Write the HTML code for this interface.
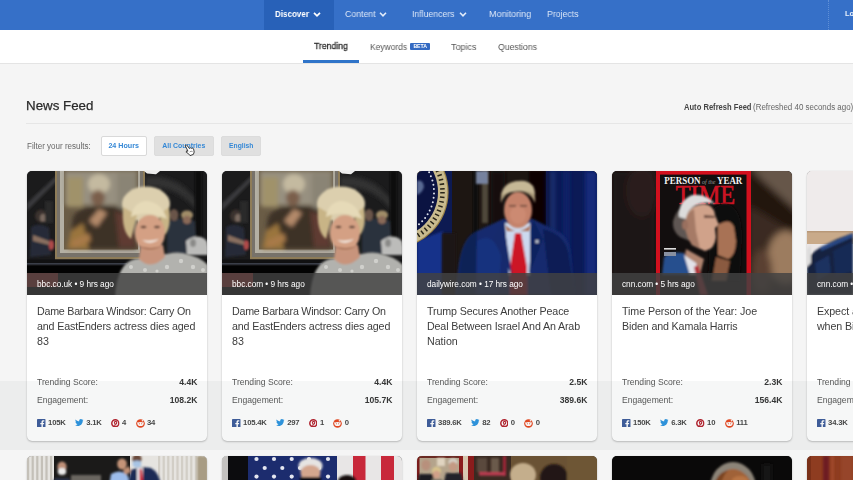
<!DOCTYPE html>
<html lang="en">
<head>
<meta charset="utf-8">
<title>News Feed</title>
<style>
*{box-sizing:border-box;margin:0;padding:0}
html,body{width:853px;height:480px;overflow:hidden;background:#f5f5f5;font-family:"Liberation Sans",sans-serif;color:#333}
.card .ttl,.card .row,.card .soc,.card .src,h1,#sub span,#top span{will-change:transform}
#top{position:absolute;left:0;top:0;width:853px;height:29.5px;background:#3670c8}
#top .act{position:absolute;left:264px;top:0;width:70px;height:29.5px;background:#2861b8}
#top span{position:absolute;transform-origin:0 50%;top:0;line-height:29px;font-size:9.3px;color:#dbe6f7;white-space:nowrap}
#top span.b{font-weight:bold;color:#fff}
#top svg{position:absolute;top:12px}
#top .sep{position:absolute;left:828px;top:0;width:0;height:30px;border-left:1px dotted #5f8fd6}
#sub{position:absolute;left:0;top:29.5px;width:853px;height:34.5px;background:#fff;border-bottom:1px solid #e4e4e4}
#sub span{position:absolute;transform-origin:0 50%;top:1.7px;line-height:33px;font-size:9.3px;color:#555;white-space:nowrap}
#sub span.on{color:#2e2e2e;-webkit-text-stroke:.3px #2e2e2e;line-height:32.4px;top:.8px}
#sub .ul{position:absolute;left:303px;top:30px;width:56px;height:3px;background:#2f74c9}
#sub .beta{position:absolute;left:410.4px;top:13.4px;width:19.5px;height:6.9px;background:#3269c2;border-radius:1px;color:#fff;font-size:5.2px;line-height:7.6px;font-weight:bold;text-align:center;letter-spacing:-.1px;overflow:hidden}
h1{position:absolute;left:26.4px;top:96.9px;font-size:13.33px;-webkit-text-stroke:.25px #2b2b2b;font-weight:normal;color:#2b2b2b;line-height:18px;white-space:nowrap}
#hr{position:absolute;left:26px;top:123px;width:826px;height:1px;background:#e6e6e6}
#auto{position:absolute;left:683.5px;top:101px;font-size:8.3px;line-height:12px;color:#444;font-weight:bold;white-space:nowrap;transform-origin:0 50%;transform:scaleX(.915)}
#auto2{position:absolute;left:753px;top:101px;font-size:8.3px;line-height:12px;color:#666;white-space:nowrap;transform-origin:0 50%;transform:scaleX(.957)}
#flt{position:absolute;left:26.7px;top:140px;font-size:8.3px;line-height:12px;color:#666;white-space:nowrap;transform-origin:0 50%;transform:scaleX(.967)}
.btn{position:absolute;top:136px;height:19.6px;border:1px solid #d9d9d9;border-radius:2px;background:#fff;color:#3588d6;font-size:7.33px;font-weight:bold;line-height:18.2px;text-align:center;white-space:nowrap}
.btn span{display:inline-block}
.btn.g{background:#e0e0e0;border-color:#dcdcdc}
.card{position:absolute;top:171px;width:180px;height:270px;background:#fff;border-radius:5px;box-shadow:0 1px 2px rgba(0,0,0,.22),0 0 1px rgba(0,0,0,.15);overflow:hidden}
.card .img{position:absolute;left:0;top:0;width:181px;height:124px;background:#444;overflow:hidden}
.card .img svg{position:absolute;left:0;top:0}
.card .src{position:absolute;left:0;top:102px;width:181px;height:22px;background:rgba(66,66,66,.82);color:#fff;font-size:8.3px;line-height:22px;padding-left:10px;white-space:nowrap;letter-spacing:-.04px}
.card .ttl{position:absolute;left:10.2px;top:133.2px;width:170px;font-size:10.7px;line-height:14.8px;color:#3d3d3d;white-space:nowrap}
.card .ttl span{display:block;letter-spacing:-.22px}
.card .row{position:absolute;left:10.2px;width:160.5px;font-size:8.6px;line-height:12px;color:#555;white-space:nowrap}
.card .row b{position:absolute;right:0;top:0;color:#333}
.card .soc{position:absolute;left:10px;top:245.8px;height:12px;display:flex;align-items:center;font-size:7.7px;line-height:12px;font-weight:bold;color:#444;white-space:nowrap;letter-spacing:-.2px}
.card .soc i{font-style:normal;margin:0 9.5px 0 2.4px}
.card .soc svg{flex:none;display:block}
.card2{top:456px;height:60px}
#band{position:absolute;left:0;top:381px;width:853px;height:68.5px;background:rgba(110,125,120,.062)}
</style>
</head>
<body>

<svg width="0" height="0" style="position:absolute">
<defs>
<filter id="b1" x="-20%" y="-20%" width="140%" height="140%"><feGaussianBlur stdDeviation="1"/></filter>
<filter id="b2" x="-20%" y="-20%" width="140%" height="140%"><feGaussianBlur stdDeviation="2"/></filter>
<filter id="b3" x="-30%" y="-30%" width="160%" height="160%"><feGaussianBlur stdDeviation="3.5"/></filter>
<symbol id="bw" viewBox="0 0 181 124">
  <rect width="181" height="124" fill="#1b1b1c"/>
  <!-- arch + bg -->
  <path d="M0 32 L30 4 L30 10 L0 40Z" fill="#38383a" filter="url(#b1)"/>
  <path d="M118 6 Q150 2 170 30 L170 40 Q150 14 118 16Z" fill="#303032" filter="url(#b2)"/>
  <rect x="168" y="0" width="7" height="70" fill="#080808" filter="url(#b1)"/>
  <!-- left bg person -->
  <g filter="url(#b1)">
    <ellipse cx="14" cy="45" rx="6" ry="6.5" fill="#3a322e"/>
    <ellipse cx="16" cy="47" rx="3" ry="4" fill="#7a6a60"/>
    <path d="M4 56 Q13 51 22 57 L24 84 L3 86 Z" fill="#262c38"/>
    <path d="M6 64 L22 70 L22 74 L6 70Z" fill="#8a7060"/>
    <ellipse cx="24.500" cy="74" rx="2.600" ry="5" fill="#b04848"/>
    <rect x="18" y="30" width="8" height="22" fill="#2c2c2a"/>
  </g>
  <!-- right bg people -->
  <g filter="url(#b1)">
    <path d="M140 52 Q150 44 168 50 L170 84 L140 82Z" fill="#2c323e"/>
    <ellipse cx="147" cy="44" rx="4.500" ry="6" fill="#6a5448"/>
    <ellipse cx="160" cy="44" rx="6" ry="4.500" fill="#a08c68"/>
    <ellipse cx="160" cy="49" rx="4" ry="4" fill="#8a6a58"/>
    <path d="M159 70 Q166 64 174 66 Q181 68 181 76 L181 84 L160 84Z" fill="#bcbcba"/>
    <ellipse cx="166" cy="72" rx="3" ry="4" fill="#8a8a88"/>
  </g>
  <!-- painting frame -->
  <rect x="28" y="-2" width="90" height="90.500" fill="#8e7c58"/>
  <rect x="30" y="-2" width="86" height="88" fill="#77726a"/>
  <rect x="33" y="-2" width="80" height="84" fill="#b4b0a4"/>
  <rect x="37" y="0" width="74" height="78.500" fill="#6a5c46"/>
  <g filter="url(#b2)">
    <rect x="38" y="0" width="72" height="34" fill="#979080"/>
    <rect x="90" y="2" width="20" height="60" fill="#8a8474"/>
    <rect x="40" y="6" width="16" height="30" fill="#a0926a"/>
    <path d="M42 78 L46 46 Q54 34 70 36 Q92 32 104 44 L110 78Z" fill="#3c3028"/>
    <path d="M40 78 L44 60 L56 52 L62 78Z" fill="#9a743e"/>
    <path d="M88 40 L104 46 L108 76 L92 76Z" fill="#5e3a30"/>
    <ellipse cx="72" cy="13" rx="11" ry="10" fill="#c4baa0"/>
    <ellipse cx="71" cy="27" rx="7" ry="8" fill="#7a5e4c"/>
    <path d="M62 50 L72 38 L80 42 L70 56Z" fill="#b48a6a"/>
    <path d="M44 70 L62 62 L64 70 L46 77Z" fill="#a87a48"/>
  </g>
  <!-- table -->
  <rect x="0" y="88.500" width="181" height="36" fill="#111112"/>
  <rect x="0" y="92" width="100" height="1.600" fill="#3a3e48"/>
  <rect x="0" y="95" width="181" height="29" fill="#030303"/>
  <!-- woman -->
  <g filter="url(#b1)">
    <path d="M88 126 Q90 92 108 88 L128 86 Q146 80 156 82 Q174 86 181 94 L181 126Z" fill="#b2b2ae"/>
    <path d="M112 88 Q124 100 138 86 L136 74 L114 74Z" fill="#c8947c"/>
    <ellipse cx="119" cy="33" rx="24" ry="17.500" fill="#dccfae"/>
    <path d="M96 36 Q94 60 104 68 L110 44Z" fill="#c8b486"/>
    <path d="M142 36 Q145 56 138 64 L132 44Z" fill="#c8b486"/>
    <ellipse cx="123" cy="62" rx="15" ry="18" fill="#d4a084"/>
    <path d="M104 46 Q118 38 140 48 Q134 30 118 30 Q106 32 104 46Z" fill="#e6dab8"/>
    <path d="M115 69 Q123 75 132 68 Q123 71 115 69Z" fill="#f4ece4"/>
    <ellipse cx="116.500" cy="56" rx="3" ry="1.200" fill="#5a4034"/>
    <ellipse cx="130" cy="56" rx="3" ry="1.200" fill="#5a4034"/>
    <path d="M110 74 Q123 84 136 74 Q124 80 110 74Z" fill="#a8745c"/>
  </g>
  <g fill="#d0d0cc"><circle cx="104" cy="96" r="2"/><circle cx="118" cy="99" r="2"/><circle cx="140" cy="96" r="2.200"/><circle cx="154" cy="90" r="2.200"/><circle cx="166" cy="96" r="2.200"/><circle cx="130" cy="100" r="1.600"/><circle cx="176" cy="99" r="2"/></g>
  <path d="M117 0 L133 0 L129 3.200 L120 2.400Z" fill="#ececec"/>
  <!-- bbc logo faint -->
  <rect x="0" y="102" width="31" height="14" fill="#c0362c"/>
</symbol>

<symbol id="tr" viewBox="0 0 181 124">
  <rect width="181" height="124" fill="#1d1612"/>
  <rect x="56" y="0" width="5" height="110" fill="#0a0808" filter="url(#b1)"/>
  <rect x="74" y="0" width="14" height="60" fill="#120e0b" filter="url(#b2)"/>
  <rect x="112" y="0" width="18" height="70" fill="#080606" filter="url(#b1)"/>
  <!-- flag pole -->
  <rect x="65" y="0" width="6" height="52" fill="#50463a" filter="url(#b1)"/>
  <rect x="59" y="0" width="12" height="13" fill="#76829e" filter="url(#b1)"/>
  <!-- left curtain + seal -->
  <rect x="0" y="0" width="35" height="124" fill="#0d1a52"/>
  <path d="M0 70 L26 60 L25 124 L0 124Z" fill="#17338a" filter="url(#b1)"/>
  <rect x="25" y="62" width="14" height="62" fill="#1d1612" filter="url(#b1)"/>
  <circle cx="-25" cy="21" r="56.6" fill="#9c8448"/>
  <circle cx="-25" cy="21" r="55.4" fill="#c9bb8e"/>
  <circle cx="-25" cy="21" r="46" fill="#0b1342"/>
  <circle cx="-25" cy="21" r="50.5" fill="none" stroke="#2a2618" stroke-width="4.6" stroke-dasharray="1.5 3.1"/>
  <circle cx="12.1" cy="1.3" r="1" fill="#dfe3ee"/><circle cx="13.9" cy="5.3" r="1" fill="#dfe3ee"/><circle cx="15.4" cy="9.4" r="1" fill="#dfe3ee"/><circle cx="16.4" cy="13.7" r="1" fill="#dfe3ee"/><circle cx="16.9" cy="18.1" r="1" fill="#dfe3ee"/><circle cx="17.0" cy="22.5" r="1" fill="#dfe3ee"/><circle cx="16.6" cy="26.8" r="1" fill="#dfe3ee"/><circle cx="15.8" cy="31.2" r="1" fill="#dfe3ee"/><circle cx="14.5" cy="35.4" r="1" fill="#dfe3ee"/><circle cx="12.7" cy="39.4" r="1" fill="#dfe3ee"/><circle cx="10.6" cy="43.3" r="1" fill="#dfe3ee"/><circle cx="8.1" cy="46.9" r="1" fill="#dfe3ee"/><circle cx="5.2" cy="50.2" r="1" fill="#dfe3ee"/><circle cx="2.0" cy="53.2" r="1" fill="#dfe3ee"/>
  <path d="M0 10 Q6 8 7 16 Q5 22 0 24Z" fill="#5a6a94" filter="url(#b1)"/>
  <!-- right curtain -->
  <rect x="129" y="0" width="52" height="124" fill="#0b1a56"/>
  <g filter="url(#b2)">
    <rect x="129" y="0" width="5" height="124" fill="#091444"/>
    <rect x="135" y="0" width="2" height="124" fill="#2a3f8a"/>
    <rect x="146" y="0" width="7" height="124" fill="#0e2268"/>
    <rect x="168" y="0" width="12" height="124" fill="#12297a"/>
  </g>
  <!-- suit -->
  <g filter="url(#b1)">
    <path d="M38 124 L42 92 Q46 66 60 60 L86 48 L116 48 L140 60 Q152 64 154 84 L158 124Z" fill="#152b6e"/>
    <path d="M40 124 L44 88 Q48 66 60 61 L58 124Z" fill="#0f2156"/>
    <path d="M126 58 Q150 64 152 86 L158 124 L134 124Z" fill="#0d1e54"/>
    <path d="M60 70 Q76 60 84 84 L82 124 L60 124Z" fill="#19337e"/>
    <path d="M88 52 L113 52 L113 104 L92 104Z" fill="#ccd9ef"/>
    <path d="M98 62 L104 62 L110 96 L110 124 L93 124 L93 96Z" fill="#cc1428"/>
    <path d="M86 48 L95 104 L76 68Z" fill="#132a6c"/>
    <path d="M116 48 L112 104 L126 68Z" fill="#10245e"/>
    <rect x="118.500" y="69" width="3" height="3" fill="#c8ccd4"/>
  </g>
  <!-- head -->
  <g filter="url(#b1)">
    <ellipse cx="101" cy="39" rx="14" ry="18" fill="#c4826a"/>
    <ellipse cx="101" cy="44" rx="8" ry="9" fill="#cc8a72"/>
    <path d="M84 32 Q82 12 100 10 Q120 10 118 32 Q113 19 98 20 Q88 21 84 32Z" fill="#a89878"/>
    <path d="M84 24 Q90 8 108 10 Q118 12 118 24 Q108 16 84 24Z" fill="#c6b896"/>
    <path d="M88 54 Q100 66 114 54 L112 60 L90 60Z" fill="#a86c54"/>
    <rect x="92" y="34" width="7" height="1.6" fill="#6a4a3c"/>
    <rect x="103" y="34" width="7" height="1.6" fill="#6a4a3c"/>
  </g>
</symbol>
<symbol id="tm" viewBox="0 0 181 124">
  <rect width="181" height="124" fill="#1c1412"/>
  <g filter="url(#b3)">
    <rect x="0" y="0" width="44" height="124" fill="#1e1512"/>
    <ellipse cx="30" cy="20" rx="16" ry="26" fill="#2a1e1a"/>
    <rect x="136" y="-6" width="50" height="136" fill="#3a2a20"/>
    <path d="M138 -6 L190 -6 L190 44 L150 8Z" fill="#66564a"/>
    <path d="M136 0 L190 46 L190 66 L136 34Z" fill="#22160f"/>
    <ellipse cx="174" cy="86" rx="18" ry="26" fill="#9c7c5e"/>
    <ellipse cx="150" cy="100" rx="10" ry="22" fill="#5a4030"/>
  </g>
  <rect x="44" y="0" width="95" height="136" fill="#d3101e"/>
  <rect x="48" y="3.6" width="86.500" height="130" fill="#120e0e"/>
  <text x="91.3" y="13" font-family="Liberation Serif,serif" font-weight="bold" font-size="9.6" fill="#f4f4f4" text-anchor="middle" textLength="78" lengthAdjust="spacingAndGlyphs">PERSON<tspan font-style="italic" font-weight="normal" font-size="6.4" fill="#999"> of the </tspan>YEAR</text>
  <text x="93.500" y="33" font-family="Liberation Serif,serif" font-size="27.500" fill="#cc1424" stroke="#cc1424" stroke-width=".7" text-anchor="middle" textLength="59.500" lengthAdjust="spacingAndGlyphs">TIME</text>
  <!-- harris -->
  <g filter="url(#b1)">
    <path d="M98 44 Q104 30 118 34 Q130 40 130 66 L128 110 L96 110Z" fill="#0e0a0a"/>
    <path d="M106 54 Q118 46 122 56 L124 70 Q124 84 116 88 L106 84Z" fill="#a87254"/>
    <path d="M104 86 L118 90 L114 110 L100 110Z" fill="#8a5a40"/>
  </g>
  <!-- biden -->
  <g filter="url(#b1)">
    <path d="M61 50 Q64 40 70 36 L78 44 L78 70 L68 66 Q60 60 61 50Z" fill="#5e5652"/>
    <path d="M67 46 Q66 30 80 24 Q94 22 103 33 Q94 30 84 34 Q76 38 74 48Z" fill="#dcdcdc"/>
    <path d="M74 46 Q78 34 92 33 Q102 34 103 44 L107 54 L103 57 L104 66 Q103 78 93 80 L80 74 Q72 62 74 46Z" fill="#d0a28a"/>
    <path d="M74 48 Q76 40 82 38 L84 60 L88 78 L80 74 Q72 62 74 48Z" fill="#a67a66"/>
    <ellipse cx="73" cy="54" rx="3" ry="5" fill="#9a705e"/>
    <path d="M92 44 L103 45 L103 47 L92 47Z" fill="#6a4a3e"/>
    <path d="M74 78 L92 88 L88 104 L70 104Z" fill="#b08470"/>
    <path d="M50 104 L52 86 Q60 80 72 82 L84 104Z" fill="#28508e"/>
    <path d="M72 84 L84 92 L88 104 L78 104Z" fill="#e2e2e8"/>
    <path d="M82 96 L86 94 L96 124 L88 124Z" fill="#b03038"/>
  </g>
  <rect x="52" y="77" width="12" height="1.6" fill="#ddd"/>
  <rect x="52" y="81" width="12" height="4" fill="#8890a0"/>
</symbol>
<symbol id="pc" viewBox="0 0 181 124">
  <rect width="181" height="124" fill="#ebe6e6"/>
  <rect x="0" y="0" width="181" height="60" fill="#efebeb"/>
  <rect x="0" y="60" width="181" height="13" fill="#c9aa8a"/>
  <rect x="0" y="60" width="181" height="1.5" fill="#b89878"/>
  <g filter="url(#b1)">
    <path d="M0 124 L0 88 L8 80 L14 76 L30 68 L46 62 L46 124Z" fill="#12203f"/>
    <path d="M8 92 L22 84 L24 102 L10 110Z" fill="#1c3260"/>
    <path d="M26 80 L46 70 L46 100 L28 106Z" fill="#182a54"/>
    <path d="M0 78 L4 74 L4 92 L0 96Z" fill="#dcdcdc"/>
    <path d="M14 76 L46 62 L46 66 L14 80Z" fill="#2c4a86"/>
  </g>
</symbol>

<symbol id="r1" viewBox="0 0 181 30">
  <rect width="181" height="30" fill="#e6e4e0"/>
  <rect x="0" y="0" width="2.2" height="30" fill="#c4c0b8"/><rect x="4.6" y="0" width="2.2" height="30" fill="#c4c0b8"/><rect x="9.2" y="0" width="2.2" height="30" fill="#c4c0b8"/><rect x="13.799999999999999" y="0" width="2.2" height="30" fill="#c4c0b8"/><rect x="18.4" y="0" width="2.2" height="30" fill="#c4c0b8"/><rect x="23.0" y="0" width="2.2" height="30" fill="#c4c0b8"/><rect x="27.6" y="0" width="2.2" height="30" fill="#c4c0b8"/><rect x="131" y="0" width="2.2" height="30" fill="#d2cec6"/><rect x="135.6" y="0" width="2.2" height="30" fill="#d2cec6"/><rect x="140.2" y="0" width="2.2" height="30" fill="#d2cec6"/><rect x="144.79999999999998" y="0" width="2.2" height="30" fill="#d2cec6"/><rect x="149.39999999999998" y="0" width="2.2" height="30" fill="#d2cec6"/><rect x="153.99999999999997" y="0" width="2.2" height="30" fill="#d2cec6"/><rect x="158.59999999999997" y="0" width="2.2" height="30" fill="#d2cec6"/><rect x="163.19999999999996" y="0" width="2.2" height="30" fill="#d2cec6"/><rect x="167.79999999999995" y="0" width="2.2" height="30" fill="#d2cec6"/><rect x="172.39999999999995" y="0" width="2.2" height="30" fill="#d2cec6"/><rect x="176.99999999999994" y="0" width="2.2" height="30" fill="#d2cec6"/>
  <rect x="27" y="0" width="76" height="30" fill="#1b1a19"/>
  <rect x="170" y="0" width="11" height="30" fill="#a89c84" filter="url(#b1)"/>
  <g filter="url(#b1)">
    <ellipse cx="35" cy="11" rx="4.6" ry="5.5" fill="#c09078"/>
    <ellipse cx="35" cy="15.5" rx="4.2" ry="3.6" fill="#ececec"/>
    <path d="M24 30 L28 22 L42 22 L46 30Z" fill="#2a3244"/>
    <rect x="44" y="19" width="30" height="12" fill="#6a6660"/>
    <ellipse cx="95" cy="8" rx="4.8" ry="5.6" fill="#c49478"/>
    <path d="M82 30 L84 18 Q92 13 100 18 L104 30Z" fill="#9cbcea"/>
    <path d="M96 14 L102 10 L104 16 L98 19Z" fill="#c09074"/>
    <ellipse cx="110" cy="3" rx="4.6" ry="5" fill="#6a4a3a"/>
    <ellipse cx="110" cy="8" rx="4.4" ry="3.4" fill="#a8c4e4"/>
    <path d="M100 30 L104 14 Q112 10 124 12 Q132 16 134 30Z" fill="#1e2c54"/>
    <path d="M110 12 L116 12 L116 30 L110 30Z" fill="#e8e8ee"/>
    <path d="M112.5 13 L115 13 L116.5 30 L112.5 30Z" fill="#c82030"/>
  </g>
</symbol>
<symbol id="r2" viewBox="0 0 181 30">
  <rect width="181" height="30" fill="#e8e6e6"/>
  <rect x="0" y="0" width="6" height="30" fill="#c4c2c0"/>
  <rect x="6" y="0" width="20" height="30" fill="#0c0c0e"/>
  <rect x="26" y="0" width="89" height="30" fill="#1c2c6e"/>
  <circle cx="34.5" cy="3" r="2.1" fill="#e4e6f0"/><circle cx="52" cy="3" r="2.1" fill="#e4e6f0"/><circle cx="69.7" cy="3" r="2.1" fill="#e4e6f0"/><circle cx="87" cy="3" r="2.1" fill="#e4e6f0"/><circle cx="106" cy="3" r="2.1" fill="#e4e6f0"/><circle cx="34.5" cy="20.6" r="2.1" fill="#e4e6f0"/><circle cx="52" cy="20.6" r="2.1" fill="#e4e6f0"/><circle cx="69.7" cy="20.6" r="2.1" fill="#e4e6f0"/><circle cx="87" cy="20.6" r="2.1" fill="#e4e6f0"/><circle cx="106" cy="20.6" r="2.1" fill="#e4e6f0"/><circle cx="42.7" cy="12" r="2.1" fill="#e4e6f0"/><circle cx="60.3" cy="12" r="2.1" fill="#e4e6f0"/><circle cx="78" cy="12" r="2.1" fill="#e4e6f0"/><circle cx="97" cy="12" r="2.1" fill="#e4e6f0"/>
  <rect x="131" y="0" width="12.5" height="30" fill="#c8283a"/>
  <rect x="159" y="0" width="13" height="30" fill="#c8283a"/>
  <g filter="url(#b1)">
    <ellipse cx="88.5" cy="10" rx="12" ry="8" fill="#e6e4e2"/>
    <ellipse cx="88.5" cy="17" rx="10" ry="8" fill="#d4a68e"/>
    <path d="M78 21 L99 21 L99 30 L78 30Z" fill="#101012"/>
    <ellipse cx="125" cy="25" rx="9" ry="6" fill="#141010"/>
  </g>
</symbol>
<symbol id="r3" viewBox="0 0 181 30">
  <rect width="181" height="30" fill="#6a5234"/>
  <rect x="0" y="0" width="57" height="30" fill="#b4a48c"/>
  <rect x="0" y="0" width="57" height="2" fill="#6a2a22"/>
  <rect x="0" y="0" width="2.5" height="30" fill="#7a1c1c"/>
  <rect x="42" y="0" width="4" height="30" fill="#8a1c1c"/>
  <rect x="46" y="0" width="5" height="30" fill="#d8c8b0"/>
  <rect x="51" y="0" width="6" height="30" fill="#8a1c1c"/>
  <rect x="57" y="0" width="37" height="30" fill="#3a2a22"/>
  <g filter="url(#b1)">
    <rect x="20" y="2" width="8" height="8" fill="#e0d4c0"/>
    <ellipse cx="9" cy="9" rx="4.5" ry="5.5" fill="#b8907c"/>
    <path d="M0 30 L2 18 L16 18 L18 30Z" fill="#1c1c20"/>
    <ellipse cx="19.5" cy="15" rx="4.6" ry="4.2" fill="#d8c48c"/>
    <ellipse cx="19.5" cy="18.5" rx="3.6" ry="4" fill="#d0a088"/>
    <path d="M13 30 L15 23 L25 23 L27 30Z" fill="#7a7468"/>
    <ellipse cx="36" cy="6" rx="4.6" ry="3.6" fill="#d8d4cc"/>
    <ellipse cx="36" cy="10.5" rx="4.2" ry="5" fill="#c49a84"/>
    <path d="M26 30 L29 17 L44 17 L47 30Z" fill="#20242c"/>
    <rect x="60" y="2" width="10" height="14" fill="#5a4a3c"/>
    <rect x="74" y="2" width="8" height="14" fill="#6a5a4c"/>
    <rect x="86" y="0" width="3" height="20" fill="#a02838"/>
    <rect x="62" y="16" width="26" height="3.6" fill="#b83a50"/>
    <ellipse cx="106" cy="19" rx="13" ry="12" fill="#c4ae8c"/>
    <ellipse cx="137" cy="22" rx="14" ry="14" fill="#241612"/>
    <rect x="150" y="0" width="31" height="30" fill="#6e5636"/>
  </g>
</symbol>
<symbol id="r4" viewBox="0 0 181 30">
  <rect width="181" height="30" fill="#0a0909"/>
  <g filter="url(#b1)">
    <ellipse cx="121" cy="32" rx="23" ry="26" fill="#8c8478"/>
    <ellipse cx="121" cy="38" rx="20" ry="25" fill="#a06238"/>
    <path d="M102 30 Q104 18 116 14 Q108 24 110 30Z" fill="#7a4420"/>
    <ellipse cx="128" cy="24" rx="8" ry="4" fill="#b87444"/>
  </g>
  <rect x="150" y="8" width="10" height="22" fill="#141212" filter="url(#b2)"/>
</symbol>
<symbol id="r5" viewBox="0 0 181 30">
  <rect width="181" height="30" fill="#8e3c20"/>
  <rect x="0" y="0" width="4" height="30" fill="#7a3018"/>
  <g filter="url(#b1)">
    <rect x="16" y="0" width="6" height="30" fill="#6e1c22"/>
    <rect x="24" y="0" width="3" height="30" fill="#a04a2a"/>
    <rect x="34" y="0" width="12" height="30" fill="#96442a"/>
  </g>
</symbol>
<symbol id="ifb" viewBox="0 0 9 9" preserveAspectRatio="none"><rect width="9" height="9" rx=".7" fill="#3b5a9a"/><path d="M6.1 9V5.7h1.15l.2-1.45H6.1V3.4c0-.42.12-.7.72-.7h.75V1.42c-.13-.02-.58-.06-1.1-.06-1.1 0-1.85.67-1.85 1.9v1H3.4V5.7h1.22V9z" fill="#fff"/></symbol>
<symbol id="itw" viewBox="0 2 24 20" preserveAspectRatio="none"><path fill="#2a94e0" d="M23.953 4.57a10 10 0 01-2.825.775 4.958 4.958 0 002.163-2.723c-.951.555-2.005.959-3.127 1.184a4.92 4.92 0 00-8.384 4.482C7.69 8.095 4.067 6.13 1.64 3.162a4.822 4.822 0 00-.666 2.475c0 1.71.87 3.213 2.188 4.096a4.904 4.904 0 01-2.228-.616v.06a4.923 4.923 0 003.946 4.827 4.996 4.996 0 01-2.212.085 4.936 4.936 0 004.604 3.417 9.867 9.867 0 01-6.102 2.105c-.39 0-.779-.023-1.17-.067a13.995 13.995 0 007.557 2.209c9.053 0 13.998-7.496 13.998-13.985 0-.21 0-.42-.015-.63A9.935 9.935 0 0024 4.59z"/></symbol>
<symbol id="ipn" viewBox="0 0 10 10"><circle cx="5" cy="5" r="4.1" fill="#fff" stroke="#b5202c" stroke-width="1.7"/><path d="M4.3 8.4 L5 5.6 M4.9 5.9 Q3.4 4.6 4.2 3.3 Q5.2 2.2 6.4 3.2 Q7.1 4.4 6.2 5.6 Q5.5 6.2 4.9 5.6" fill="none" stroke="#b5202c" stroke-width="1.3"/></symbol>
<symbol id="ird" viewBox="0 0 10 10"><circle cx="5" cy="5" r="4.8" fill="#e8441c"/><circle cx="7.2" cy="2" r=".9" fill="#fff"/><ellipse cx="5" cy="5.6" rx="3.3" ry="2.3" fill="#fff"/><circle cx="3.7" cy="5.2" r=".6" fill="#e8441c"/><circle cx="6.3" cy="5.2" r=".6" fill="#e8441c"/><circle cx="2" cy="4.4" r=".8" fill="#fff"/><circle cx="8" cy="4.4" r=".8" fill="#fff"/></symbol>
</defs>
</svg>
<div id="top">
  <div class="act"></div>
  <span class="b" style="left:274.7px;transform:scaleX(.863)">Discover</span>
  <svg style="left:313px" width="8" height="6" viewBox="0 0 8 6"><path d="M1 0.8 L4 3.8 L7 0.8" fill="none" stroke="#fff" stroke-width="1.7"/></svg>
  <span style="left:344.9px;transform:scaleX(.942)">Content</span>
  <svg style="left:379px" width="8" height="6" viewBox="0 0 8 6"><path d="M1 0.8 L4 3.8 L7 0.8" fill="none" stroke="#e3ecfa" stroke-width="1.6"/></svg>
  <span style="left:411.9px;transform:scaleX(.936)">Influencers</span>
  <svg style="left:459px" width="8" height="6" viewBox="0 0 8 6"><path d="M1 0.8 L4 3.8 L7 0.8" fill="none" stroke="#e3ecfa" stroke-width="1.6"/></svg>
  <span style="left:488.6px;transform:scaleX(.972)">Monitoring</span>
  <span style="left:547px;transform:scaleX(.938)">Projects</span>
  <div class="sep"></div>
  <span class="b" style="left:845px;font-size:7.5px;line-height:27.8px;color:#e8f0fb">Lo</span>
</div>
<div id="sub">
  <span class="on" style="left:314.2px;transform:scaleX(.93)">Trending</span>
  <div class="ul"></div>
  <span style="left:370px;transform:scaleX(.907)">Keywords</span>
  <div class="beta">BETA</div>
  <span style="left:450.9px;transform:scaleX(.966)">Topics</span>
  <span style="left:498px;transform:scaleX(.931)">Questions</span>
</div>
<h1>News Feed</h1>
<div id="auto"><b>Auto Refresh Feed</b></div><div id="auto2">(Refreshed 40 seconds ago)</div>
<div id="hr"></div>
<div id="flt">Filter your results:</div>
<div class="btn" style="left:100.5px;width:46.5px"><span style="transform:scaleX(.975)">24 Hours</span></div>
<div class="btn g" style="left:154px;width:59.5px"><span style="transform:scaleX(.943)">All Countries</span></div>
<div class="btn g" style="left:221px;width:40px"><span style="transform:scaleX(.917)">English</span></div>

<!-- CARDS -->
<div class="card" style="left:26.5px">
  <div class="img" id="im1"><svg width="181" height="124"><use href="#bw"/></svg></div>
  <div class="src">bbc.co.uk • 9 hrs ago</div>
  <div class="ttl"><span style="letter-spacing:-0.243px">Dame Barbara Windsor: Carry On</span><span style="letter-spacing:-0.144px">and EastEnders actress dies aged</span><span style="letter-spacing:-0.03px">83</span></div>
  <div class="row" style="top:205.2px">Trending Score:<b>4.4K</b></div>
  <div class="row" style="top:222.7px">Engagement:<b>108.2K</b></div>
  <div class="soc"><svg width="8.7" height="8.4"><use href="#ifb"/></svg><i>105K</i><svg width="8.6" height="7.2"><use href="#itw"/></svg><i>3.1K</i><svg width="8.6" height="8.6"><use href="#ipn"/></svg><i>4</i><svg width="9" height="9"><use href="#ird"/></svg><i>34</i></div>
</div>
<div class="card" style="left:221.5px">
  <div class="img" id="im2"><svg width="181" height="124"><use href="#bw"/></svg></div>
  <div class="src">bbc.com • 9 hrs ago</div>
  <div class="ttl"><span style="letter-spacing:-0.243px">Dame Barbara Windsor: Carry On</span><span style="letter-spacing:-0.144px">and EastEnders actress dies aged</span><span style="letter-spacing:-0.03px">83</span></div>
  <div class="row" style="top:205.2px">Trending Score:<b>4.4K</b></div>
  <div class="row" style="top:222.7px">Engagement:<b>105.7K</b></div>
  <div class="soc"><svg width="8.7" height="8.4"><use href="#ifb"/></svg><i>105.4K</i><svg width="8.6" height="7.2"><use href="#itw"/></svg><i>297</i><svg width="8.6" height="8.6"><use href="#ipn"/></svg><i>1</i><svg width="9" height="9"><use href="#ird"/></svg><i>0</i></div>
</div>
<div class="card" style="left:416.5px">
  <div class="img" id="im3"><svg width="181" height="124"><use href="#tr"/></svg></div>
  <div class="src">dailywire.com • 17 hrs ago</div>
  <div class="ttl"><span style="letter-spacing:-0.133px">Trump Secures Another Peace</span><span style="letter-spacing:-0.145px">Deal Between Israel And An Arab</span><span style="letter-spacing:-0.03px">Nation</span></div>
  <div class="row" style="top:205.2px">Trending Score:<b>2.5K</b></div>
  <div class="row" style="top:222.7px">Engagement:<b>389.6K</b></div>
  <div class="soc"><svg width="8.7" height="8.4"><use href="#ifb"/></svg><i>389.6K</i><svg width="8.6" height="7.2"><use href="#itw"/></svg><i>82</i><svg width="8.6" height="8.6"><use href="#ipn"/></svg><i>0</i><svg width="9" height="9"><use href="#ird"/></svg><i>0</i></div>
</div>
<div class="card" style="left:611.5px">
  <div class="img" id="im4"><svg width="181" height="124"><use href="#tm"/></svg></div>
  <div class="src">cnn.com • 5 hrs ago</div>
  <div class="ttl"><span style="letter-spacing:-0.086px">Time Person of the Year: Joe</span><span style="letter-spacing:-0.148px">Biden and Kamala Harris</span></div>
  <div class="row" style="top:205.2px">Trending Score:<b>2.3K</b></div>
  <div class="row" style="top:222.7px">Engagement:<b>156.4K</b></div>
  <div class="soc"><svg width="8.7" height="8.4"><use href="#ifb"/></svg><i>150K</i><svg width="8.6" height="7.2"><use href="#itw"/></svg><i>6.3K</i><svg width="8.6" height="8.6"><use href="#ipn"/></svg><i>10</i><svg width="9" height="9"><use href="#ird"/></svg><i>111</i></div>
</div>
<div class="card" style="left:806.5px">
  <div class="img" id="im5"><svg width="181" height="124"><use href="#pc"/></svg></div>
  <div class="src">cnn.com • 7 hrs ago</div>
  <div class="ttl"><span style="letter-spacing:-0.1px">Expect a</span><span style="letter-spacing:-0.1px">when Bi</span></div>
  <div class="row" style="top:205.2px">Trending Score:</div>
  <div class="row" style="top:222.7px">Engagement:</div>
  <div class="soc"><svg width="8.7" height="8.4"><use href="#ifb"/></svg><i>34.3K</i><svg width="8.6" height="7.2"><use href="#itw"/></svg><i>1.2K</i><svg width="8.6" height="8.6"><use href="#ipn"/></svg><i>2</i><svg width="9" height="9"><use href="#ird"/></svg><i>18</i></div>
</div>

<div class="card card2" style="left:26.5px"><div class="img" id="im6"><svg width="181" height="30"><use href="#r1"/></svg></div></div>
<div class="card card2" style="left:221.5px"><div class="img" id="im7"><svg width="181" height="30"><use href="#r2"/></svg></div></div>
<div class="card card2" style="left:416.5px"><div class="img" id="im8"><svg width="181" height="30"><use href="#r3"/></svg></div></div>
<div class="card card2" style="left:611.5px"><div class="img" id="im9"><svg width="181" height="30"><use href="#r4"/></svg></div></div>
<div class="card card2" style="left:806.5px"><div class="img" id="im10"><svg width="181" height="30"><use href="#r5"/></svg></div></div>

<svg id="cur" style="position:absolute;left:183.5px;top:143.5px" width="11" height="12" viewBox="0 0 11 12"><path d="M1.2 1.6 Q2.4 .4 3.4 1.8 L5.4 4.6 L6.6 3.8 L7.6 4.4 L8.6 4 L9.6 5 L10.2 8 L9.4 10.4 L6 11.6 L4.4 9.6 L2.2 8.2 L2.6 6.8 L4 7.2 Z" fill="#fff" stroke="#2a2a2a" stroke-width=".9" stroke-linejoin="round"/><path d="M5.6 8 Q7 6.6 8.6 7.6" fill="none" stroke="#666" stroke-width=".7"/></svg>
<div id="band"></div>
</body>
</html>
